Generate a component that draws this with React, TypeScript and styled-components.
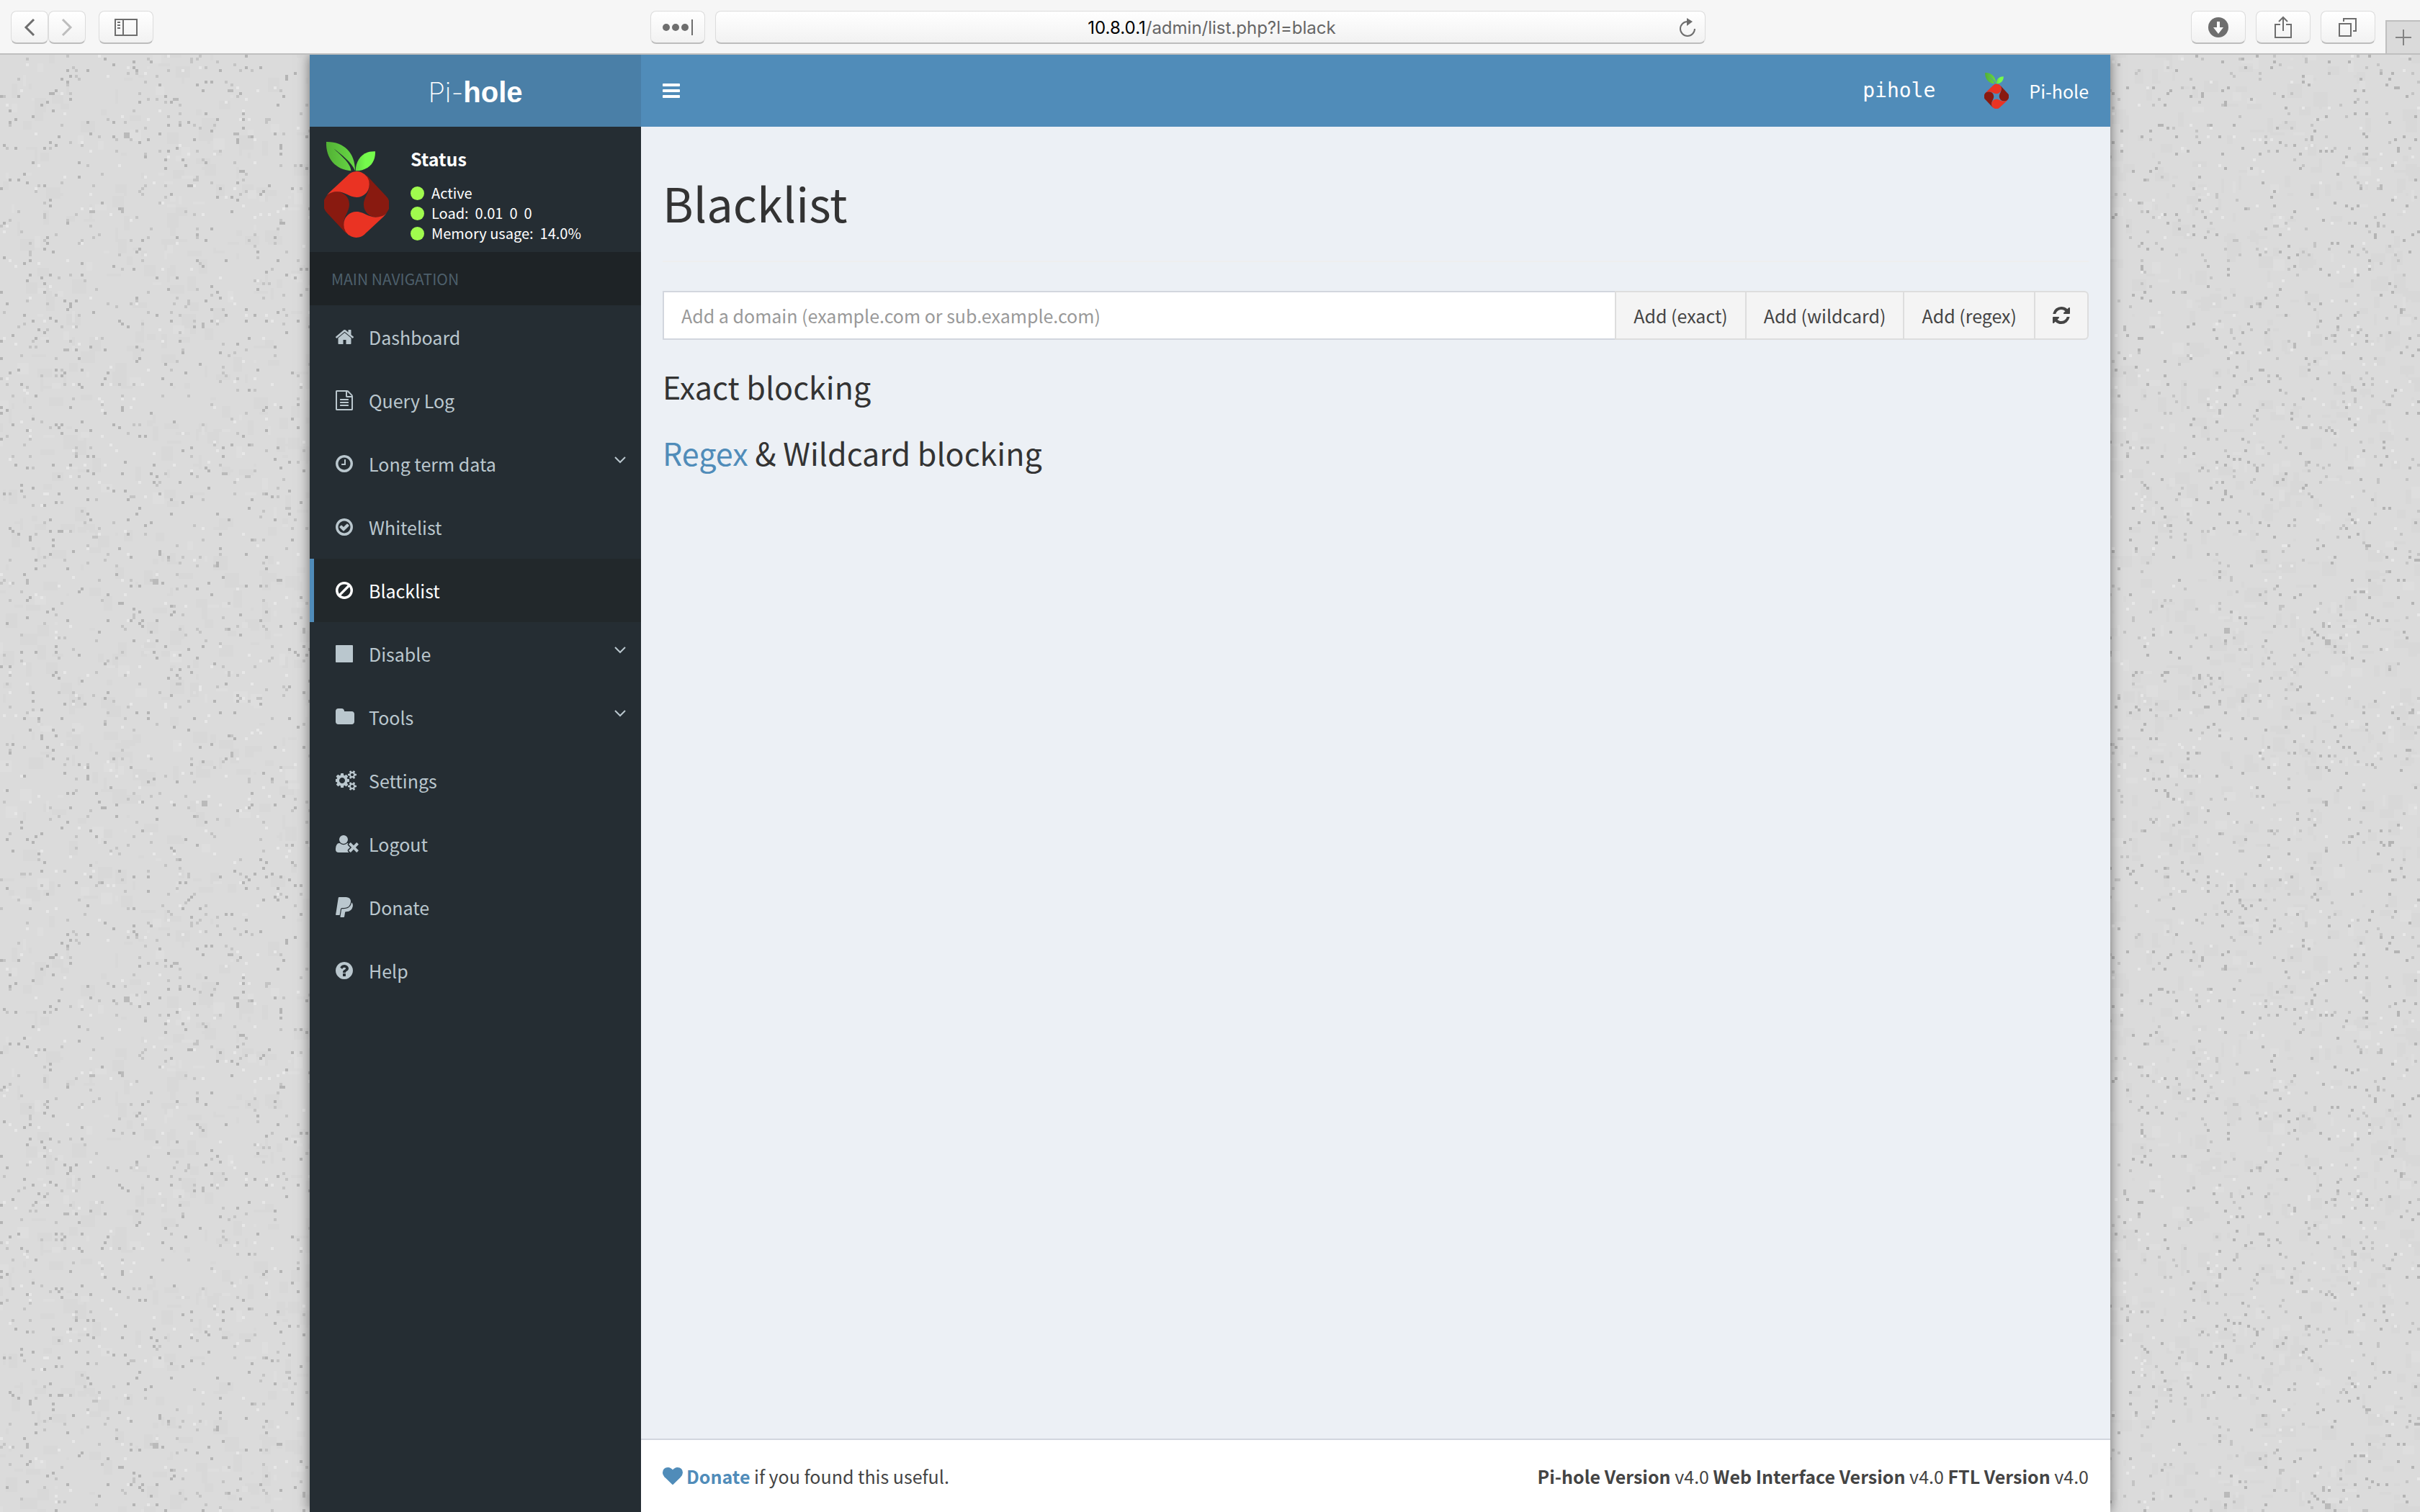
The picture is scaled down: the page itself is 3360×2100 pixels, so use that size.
import React from "react";
import styled, { createGlobalStyle, css } from "styled-components";

const sans = `"Source Sans Pro", "Noto Sans CJK SC", "Noto Sans", sans-serif`;
const system = `Inter, Roboto, "Liberation Sans", sans-serif`;

const GlobalStyle = createGlobalStyle`
  *, *::before, *::after { box-sizing: border-box; }
  body {
    margin: 0;
    background: #dbdbdb;
    color: #333;
    font-family: ${sans};
    font-size: 25px;
    line-height: 40px;
  }
  h1, h2, p, ul { margin: 0; padding: 0; font-weight: 400; }
  a { color: inherit; text-decoration: none; }
  button, input { font: inherit; color: inherit; margin: 0; }
  button { cursor: pointer; }
  svg { display: block; flex: none; }
`;

/* ---------- Speckled backdrop ---------- */

const TILE = 1200;
const CELL = 4;

function buildSpeckles() {
  let seed = 20180806;
  const random = () => {
    seed = (seed * 1664525 + 1013904223) >>> 0;
    return seed / 4294967296;
  };
  const layer = (count: number, min: number, max: number) => {
    let d = "";
    for (let i = 0; i < count; i += 1) {
      const x = Math.floor((random() * TILE) / CELL) * CELL;
      const y = Math.floor((random() * TILE) / CELL) * CELL;
      const w = CELL * (min + Math.floor(random() * (max - min + 1)));
      const h = CELL * (min + Math.floor(random() * (max - min + 1)));
      d += `M${x} ${y}h${w}v${h}h-${w}z`;
    }
    return d;
  };
  return [
    { fill: "#d8d8d8", d: layer(1300, 1, 5) },
    { fill: "#dedede", d: layer(400, 1, 4) },
    { fill: "#c4c4c4", d: layer(1500, 1, 1) },
    { fill: "#b4b4b4", d: layer(1700, 1, 1) },
    { fill: "#bababa", d: layer(40, 1, 2) },
    { fill: "#e7e7e7", d: layer(700, 1, 1) },
  ];
}

const speckles = buildSpeckles();

const Backdrop = styled.svg`
  position: absolute;
  inset: 0;
  width: 100%;
  height: 100%;
  z-index: -1;
`;

/* ---------- Browser bar ---------- */

const Window = styled.div`
  position: relative;
  z-index: 0;
  min-height: 100vh;
  display: flex;
  flex-direction: column;
`;

const BrowserBar = styled.header`
  display: grid;
  grid-template-columns: minmax(0, 888fr) minmax(0, 1465fr) minmax(0, 992fr);
  align-items: center;
  height: 76px;
  padding: 2px 0 0 15px;
  background: #f6f6f6;
  border-bottom: 2px solid #bfbfbf;
  position: relative;
  z-index: 1;
`;

const BarGroup = styled.div<{ $gap: number }>`
  display: flex;
  align-items: center;
  gap: ${(p) => p.$gap}px;
`;

const chromeSurface = css`
  height: 46px;
  border: 1px solid #dcdcdc;
  border-bottom: 2px solid #bdbdbd;
  border-radius: 8px;
  background: linear-gradient(#fff, #f2f2f2);
`;

const ChromeButton = styled.button<{ $narrow?: boolean; $faded?: boolean }>`
  ${chromeSurface}
  display: grid;
  place-items: center;
  flex: none;
  width: ${(p) => (p.$narrow ? 52 : 76)}px;
  padding: 0;
  color: ${(p) => (p.$faded ? "#bdbdbd" : "#6e6e6e")};
`;

const AddressBar = styled.div`
  ${chromeSurface}
  display: flex;
  align-items: center;
  flex: 1;
  min-width: 0;
  padding: 0 12px 0 40px;
`;

const Address = styled.button`
  flex: 1;
  border: 0;
  padding: 2px 0 0;
  background: none;
  color: #666;
  font-family: ${system};
  font-size: 24px;
  line-height: 40px;
  cursor: text;
`;

const Host = styled.span`
  color: #000;
`;

const ReloadButton = styled.button`
  border: 0;
  padding: 0;
  background: none;
  color: #6e6e6e;
`;

const EndTools = styled.div`
  display: flex;
  justify-content: flex-end;
  align-items: center;
  align-self: stretch;
  gap: 14px;
`;

const NewTab = styled.button`
  display: grid;
  place-items: center;
  align-self: flex-end;
  width: 48px;
  height: 46px;
  padding: 0;
  border: 0;
  border-top: 2px solid #bfbfbf;
  border-left: 2px solid #bfbfbf;
  background: #dadada;
  color: #838383;
`;

/* ---------- Application frame ---------- */

const Frame = styled.div`
  flex: 1;
  display: flex;
  flex-direction: column;
  width: 100%;
  max-width: 2500px;
  margin: 0 auto;
  box-shadow: 0 0 16px rgba(0, 0, 0, 0.5);
`;

const TopBar = styled.div`
  display: flex;
  height: 100px;
  color: #fff;
  background: #508cb9;
`;

const Brand = styled.a`
  display: flex;
  align-items: center;
  justify-content: center;
  width: 460px;
  padding-top: 4px;
  background: #4a7fa7;
  font: 200 40px/96px "Helvetica Neue", "Liberation Sans", Arial, sans-serif;
`;

const BrandLight = styled.span`
  font-family: "Helvetica Neue", Inter, Roboto, sans-serif;
  font-weight: 200;
  font-size: 38px;
`;

const BrandBold = styled.b`
  font-weight: 700;
`;

const Nav = styled.nav`
  flex: 1;
  display: flex;
  align-items: center;
  justify-content: space-between;
  padding: 0 30px;
`;

const MenuToggle = styled.button`
  border: 0;
  padding: 0;
  background: none;
  color: #fff;
`;

const Account = styled.div`
  display: flex;
  align-items: center;
  gap: 68px;
`;

const HostName = styled.code`
  font-family: "DejaVu Sans Mono", "Liberation Mono", monospace;
  font-size: 28px;
`;

const User = styled.a`
  display: flex;
  align-items: center;
  gap: 28px;
`;

const Body = styled.div`
  flex: 1;
  display: flex;
`;

/* ---------- Sidebar ---------- */

const Sidebar = styled.aside`
  flex: none;
  width: 460px;
  background: #252d33;
`;

const StatusPanel = styled.section`
  display: flex;
  gap: 30px;
  height: 174px;
  padding: 20px;
  color: #fff;
`;

const StatusTitle = styled.p`
  font-weight: 700;
  line-height: 40px;
  margin-bottom: 14px;
  padding-top: 4px;
`;

const StatusLine = styled.div`
  display: flex;
  align-items: center;
  gap: 10px;
  font-size: 20px;
  line-height: 28px;
  white-space: pre;
`;

const Dot = styled.i`
  width: 19px;
  height: 19px;
  border-radius: 50%;
  background: #a0fb4e;
`;

const NavHeading = styled.h2`
  padding: 0 30px;
  background: #1e2326;
  color: #4d5f6b;
  font-size: 21px;
  line-height: 74px;
`;

const NavList = styled.ul`
  list-style: none;
`;

const NavLink = styled.a<{ $active?: boolean }>`
  display: flex;
  align-items: center;
  height: 88px;
  padding: 0 20px 0 30px;
  border-left: 6px solid ${(p) => (p.$active ? "#508cb9" : "transparent")};
  background: ${(p) => (p.$active ? "#22282b" : "transparent")};
  color: ${(p) => (p.$active ? "#fff" : "#bac7ce")};
`;

const IconSlot = styled.span`
  width: 46px;
`;

const Caret = styled.svg`
  margin: 0 0 10px auto;
`;

/* ---------- Main column ---------- */

const Main = styled.div`
  flex: 1;
  min-width: 0;
  display: flex;
  flex-direction: column;
  background: #ecf0f5;
`;

const Content = styled.main`
  flex: 1;
  padding: 30px;
`;

const PageHeader = styled.div`
  padding: 36px 0 42px;
  margin-bottom: 40px;
  border-bottom: 2px solid #eee;
`;

const PageTitle = styled.h1`
  font-size: 65px;
  line-height: 78px;
`;

const DomainForm = styled.form`
  display: flex;
  height: 68px;
  margin-bottom: 38px;
`;

const DomainInput = styled.input`
  flex: 1;
  min-width: 0;
  padding: 0 24px;
  border: 2px solid #d2d6de;
  border-right: 0;
  border-radius: 0;
  background: #fff;
  outline: 0;
  &::placeholder {
    color: #999;
    opacity: 1;
  }
`;

const FormButton = styled.button`
  display: flex;
  align-items: center;
  padding: 0 24px;
  border: 2px solid #ddd;
  border-right-width: 0;
  background: #f4f4f4;
  color: #444;
  &:last-child {
    border-right-width: 2px;
    border-radius: 0 6px 6px 0;
  }
`;

const ListTitle = styled.h2`
  font-size: 43px;
  line-height: 52px;
  margin-bottom: 40px;
`;

const Accent = styled.a`
  color: #508cb9;
`;

const Footer = styled.footer`
  display: flex;
  align-items: center;
  justify-content: space-between;
  height: 102px;
  padding: 0 30px;
  border-top: 2px solid #d2d6de;
  background: #fff;
  color: #444;
`;

const DonateNote = styled.p`
  display: flex;
  align-items: center;
  gap: 5px;
`;

/* ---------- Icons ---------- */

type Glyph = { box: string; w: number; d: string };

const ring =
  "M1440 896q0-148-73-273t-198-198-273-73-273 73-198 198-73 273 73 273 198 198 273 73 273-73 198-198 73-273zm224 0q0 209-103 385.5t-279.5 279.5-385.5 103-385.5-103-279.5-279.5-103-385.5 103-385.5 279.5-279.5 385.5-103 385.5 103 279.5 279.5 103 385.5z";
const disc =
  "M1664 896q0 209-103 385.5t-279.5 279.5-385.5 103-385.5-103-279.5-279.5-103-385.5 103-385.5 279.5-279.5 385.5-103 385.5 103 279.5 279.5 103 385.5z";
const smallCog =
  "v140q0 16-149 31-12 27-30 52 51 113 51 138 0 4-4 7-122 71-124 71-8 0-46-47t-52-68q-20 2-30 2t-30-2q-14 21-52 68t-46 47q-2 0-124-71-4-3-4-7 0-25 51-138-18-25-30-52-149-15-149-31v-140q0-16 149-31 13-29 30-52-51-113-51-138 0-4 4-7 4-2 35-20t59-34 30-16q8 0 46 46.5t52 67.5q20-2 30-2t30 2q51-71 92-112l6-2q4 0 124 70 4 3 4 7 0 25-51 138 17 23 30 52 149 15 149 31z";

const glyphs: Record<string, Glyph> = {
  home: {
    box: "96 0 1664 1792",
    w: 26,
    d: "M1472 992v480q0 26-19 45t-45 19h-384v-384h-256v384h-384q-26 0-45-19t-19-45v-480q0-1 .5-3t.5-3l575-474 575 474q1 2 1 6zm223-69l-62 74q-8 9-21 11h-3q-13 0-21-7l-692-577-692 577q-12 8-24 7-13-2-21-11l-62-74q-8-10-7-23.5t11-21.5l719-599q32-26 76-26t76 26l244 204v-195q0-14 9-23t23-9h192q14 0 23 9t9 23v408l219 182q10 8 11 21.5t-7 23.5z",
  },
  file: {
    box: "128 0 1536 1792",
    w: 24,
    d: "M1596 380q28 28 48 76t20 88v1152q0 40-28 68t-68 28h-1344q-40 0-68-28t-28-68v-1600q0-40 28-68t68-28h896q40 0 88 20t76 48zm-444-244v376h376q-10-29-22-41l-313-313q-12-12-41-22zm384 1528v-1024h-416q-40 0-68-28t-28-68v-416h-768v1536h1280zm-1024-864q0-14 9-23t23-9h704q14 0 23 9t9 23v64q0 14-9 23t-23 9h-704q-14 0-23-9t-9-23v-64zm736 224q14 0 23 9t9 23v64q0 14-9 23t-23 9h-704q-14 0-23-9t-9-23v-64q0-14 9-23t23-9h704zm0 256q14 0 23 9t9 23v64q0 14-9 23t-23 9h-704q-14 0-23-9t-9-23v-64q0-14 9-23t23-9h704z",
  },
  clock: {
    box: "128 0 1536 1792",
    w: 24,
    d: "M1024 544v448q0 14-9 23t-23 9h-320q-14 0-23-9t-9-23v-64q0-14 9-23t23-9h224v-352q0-14 9-23t23-9h64q14 0 23 9t9 23z" + ring,
  },
  check: {
    box: "128 0 1536 1792",
    w: 24,
    d: "M1299 813l-422 422q-19 19-45 19t-45-19l-294-294q-19-19-19-45t19-45l102-102q19-19 45-19t45 19l147 147 275-275q19-19 45-19t45 19l102 102q19 19 19 45t-19 45z" + ring,
  },
  ban: {
    box: "128 0 1536 1792",
    w: 24,
    d: "M1440 893q0-161-87-295l-754 753q137 89 297 89 111 0 211.5-43.5t173.5-116.5 116-174.5 43-212.5zm-999 299l755-754q-135-91-300-91-148 0-273 73t-198 199-73 274q0 162 89 299zm1223-299q0 157-61 300t-163.5 246-245 164-298.5 61-298.5-61-245-164-163.5-246-61-300 61-299.5 163.5-245.5 245-164 298.5-61 298.5 61 245 164 163.5 245.5 61 299.5z",
  },
  stop: {
    box: "128 0 1536 1792",
    w: 24,
    d: "M1664 192v1408q0 26-19 45t-45 19h-1408q-26 0-45-19t-19-45v-1408q0-26 19-45t45-19h1408q26 0 45 19t19 45z",
  },
  folder: {
    box: "64 0 1664 1792",
    w: 26,
    d: "M1728 608v704q0 92-66 158t-158 66h-1216q-92 0-158-66t-66-158v-960q0-92 66-158t158-66h320q92 0 158 66t66 158v32h672q92 0 158 66t66 158z",
  },
  cogs: {
    box: "0 0 1920 1792",
    w: 30,
    d:
      "M832 896q0-106-75-181t-181-75-181 75-75 181 75 181 181 75 181-75 75-181zm768 512q0-52-38-90t-90-38-90 38-38 90q0 53 37.5 90.5t90.5 37.5 90.5-37.5 37.5-90.5zm0-1024q0-52-38-90t-90-38-90 38-38 90q0 53 37.5 90.5t90.5 37.5 90.5-37.5 37.5-90.5zm-384 421v185q0 10-7 19.5t-16 10.5l-155 24q-11 35-32 76 34 48 90 115 7 11 7 20 0 12-7 19-23 30-82.5 89.5t-78.5 59.5q-11 0-21-7l-115-90q-37 19-77 31-11 108-23 155-7 24-30 24h-186q-11 0-20-7.5t-10-17.5l-23-153q-34-10-75-31l-118 89q-7 7-20 7-11 0-21-8-144-133-144-160 0-9 7-19 10-14 41-53t47-61q-23-44-35-82l-152-24q-10-1-17-9.5t-7-19.5v-185q0-10 7-19.5t16-10.5l155-24q11-35 32-76-34-48-90-115-7-11-7-20 0-12 7-20 22-30 82-89t79-59q11 0 21 7l115 90q34-18 77-32 11-108 23-154 7-24 30-24h186q11 0 20 7.5t10 17.5l23 153q34 10 75 31l118-89q8-7 20-7 11 0 21 8 144 133 144 160 0 8-7 19-12 16-42 54t-45 60q23 48 34 82l152 23q10 2 17 10.5t7 19.5z" +
      "M1856 1338" + smallCog + "M1856 314" + smallCog,
  },
  logout: {
    box: "0 0 2048 1792",
    w: 32,
    d: "M704 896q-159 0-271.5-112.5t-112.5-271.5 112.5-271.5 271.5-112.5 271.5 112.5 112.5 271.5-112.5 271.5-271.5 112.5zm1077 320l249 249q9 9 9 23 0 13-9 22l-136 136q-9 9-22 9-14 0-23-9l-249-249-249 249q-9 9-23 9-13 0-22-9l-136-136q-9-9-9-22 0-14 9-23l249-249-249-249q-9-9-9-23 0-13 9-22l136-136q9-9 22-9 14 0 23 9l249 249 249-249q9-9 23-9 13 0 22 9l136 136q9 9 9 22 0 14-9 23zm-498 0l-181 181q-37 37-37 91 0 53 37 90l83 83q-21 3-44 3h-874q-121 0-194-69t-73-190q0-53 3.5-103.5t14-109 26.5-108.5 43-97.5 62-81 85.5-53.5 111.5-20q19 0 39 17 154 122 319 122t319-122q20-17 39-17 28 0 57 6-28 27-41 50t-13 56q0 54 37 91z",
  },
  paypal: {
    box: "128 0 1536 1792",
    w: 24,
    d: "M1647 646q18 84-4 204-87 444-565 444h-44q-25 0-44 16.5t-24 42.5l-4 19-55 346-2 15q-5 26-24.5 42.5t-44.5 16.5h-251q-21 0-33-15t-9-36q9-56 26.5-168t26.5-168 27-167.5 27-167.5q5-37 43-37h131q133 2 236-21 175-39 287-144 102-95 155-246 24-70 35-133 1-6 2.5-7.5t3.5-1 6 3.5q79 59 98 162zm-172-282q0 107-46 236-80 233-302 315-113 40-252 42 0 1-90 1l-90-1q-100 0-118 96-2 8-85 530-1 10-12 10h-295q-22 0-36.5-16.5t-11.5-38.5l232-1471q5-29 27.5-48t51.5-19h598q34 0 97.5 13t111.5 32q107 41 163.5 123t56.5 196z",
  },
  help: {
    box: "128 0 1536 1792",
    w: 24,
    d: "M1024 1376v-192q0-14-9-23t-23-9h-192q-14 0-23 9t-9 23v192q0 14 9 23t23 9h192q14 0 23-9t9-23zm256-672q0-88-55.5-163t-138.5-116-170-41q-243 0-371 213-15 24 8 42l132 100q7 6 19 6 16 0 25-12 53-68 86-92 34-24 86-24 48 0 85.5 26t37.5 59q0 38-20 61t-68 45q-63 28-115.5 86.5t-52.5 125.5v36q0 14 9 23t23 9h192q14 0 23-9t9-23q0-19 21.5-49.5t54.5-49.5q32-18 49-28.5t46-35 44.5-48 28-60.5 12.5-81z" + disc,
  },
  refresh: {
    box: "128 0 1536 1792",
    w: 24,
    d: "M1639 1056q0 5-1 7-64 268-268 434.5t-478 166.5q-146 0-282.5-55t-243.5-157l-129 129q-19 19-45 19t-45-19-19-45v-448q0-26 19-45t45-19h448q26 0 45 19t19 45-19 45l-137 137q71 66 161 102t187 36q134 0 250-65t186-179q11-17 53-117 8-23 30-23h192q13 0 22.5 9.5t9.5 22.5zm25-800v448q0 26-19 45t-45 19h-448q-26 0-45-19t-19-45 19-45l138-138q-148-137-349-137-134 0-250 65t-186 179q-11 17-53 117-8 23-30 23h-199q-13 0-22.5-9.5t-9.5-22.5v-7q65-268 270-434.5t480-166.5q146 0 284 55.5t245 156.5l130-129q19-19 45-19t45 19 19 45z",
  },
  heart: {
    box: "0 0 1792 1792",
    w: 28,
    d: "M896 1664q-26 0-44-18l-624-602q-10-8-27.5-26t-55.5-65.5-68-97.5-53.5-121-23.5-138q0-220 127-344t351-124q62 0 126.5 21.5t120 58 95.5 68.5 76 68q36-36 76-68t95.5-68.5 120-58 126.5-21.5q224 0 351 124t127 344q0 221-229 450l-623 600q-18 18-44 18z",
  },
  bars: {
    box: "128 0 1536 1792",
    w: 24,
    d: "M1664 1344v128q0 26-19 45t-45 19h-1408q-26 0-45-19t-19-45v-128q0-26 19-45t45-19h1408q26 0 45 19t19 45zM1664 832v128q0 26-19 45t-45 19h-1408q-26 0-45-19t-19-45v-128q0-26 19-45t45-19h1408q26 0 45 19t19 45zM1664 320v128q0 26-19 45t-45 19h-1408q-26 0-45-19t-19-45v-128q0-26 19-45t45-19h1408q26 0 45 19t19 45z",
  },
};

function Icon({ name }: { name: string }) {
  const g = glyphs[name];
  return (
    <svg viewBox={g.box} width={g.w} height={28} fill="currentColor" fillRule="evenodd" aria-hidden="true">
      <path d={g.d} />
    </svg>
  );
}

const petal =
  "M10 226Q14 220 22 212L97 142A52 52 0 0 1 188 180A52 52 0 0 1 135 232C105 232 88 209 55 209C38 209 20 215 10 226Z";

function PiholeLogo({ id, width, height }: { id: string; width: number; height: number }) {
  return (
    <svg viewBox="0 0 270 398" width={width} height={height} aria-hidden="true">
      <defs>
        <linearGradient id={`${id}-leaf`} x1="0" x2="1">
          <stop offset="0" stopColor="#52b035" />
          <stop offset="1" stopColor="#68d945" />
        </linearGradient>
        <linearGradient id={`${id}-sprout`} x1="0" x2="1">
          <stop offset="0" stopColor="#63d943" />
          <stop offset="0.5" stopColor="#75fb4c" />
        </linearGradient>
      </defs>
      <path fill={`url(#${id}-leaf)`} d="M9 1C80-1 130 45 129 122C115 85 72 55 40 29C72 60 112 92 112 122C50 117 6 72 9 1Z" />
      <path fill={`url(#${id}-sprout)`} d="M131 122C132 72 165 38 213 41C215 92 178 123 131 122Z" />
      <g fill="#891a10">
        <path d={petal} transform="rotate(90 135 262)" />
        <path d={petal} transform="rotate(270 135 262)" />
      </g>
      <g fill="#ea3323">
        <path d={petal} />
        <path d={petal} transform="rotate(180 135 262)" />
      </g>
    </svg>
  );
}

const Line = ({ w, h, d, width = 2 }: { w: number; h: number; d: string; width?: number }) => (
  <svg viewBox={`0 0 ${w} ${h}`} width={w} height={h} fill="none" stroke="currentColor" strokeWidth={width} aria-hidden="true">
    <path d={d} />
  </svg>
);

/* ---------- Page ---------- */

const menu = [
  { icon: "home", label: "Dashboard" },
  { icon: "file", label: "Query Log" },
  { icon: "clock", label: "Long term data", tree: true },
  { icon: "check", label: "Whitelist" },
  { icon: "ban", label: "Blacklist", active: true },
  { icon: "stop", label: "Disable", tree: true },
  { icon: "folder", label: "Tools", tree: true },
  { icon: "cogs", label: "Settings" },
  { icon: "logout", label: "Logout" },
  { icon: "paypal", label: "Donate" },
  { icon: "help", label: "Help" },
];

function Browser() {
  return (
    <BrowserBar>
      <BarGroup $gap={18}>
        <BarGroup $gap={0}>
          <ChromeButton $narrow aria-label="Back">
            <Line w={16} h={26} d="M14 2L3 13L14 24" width={3} />
          </ChromeButton>
          <ChromeButton $narrow $faded aria-label="Forward">
            <Line w={16} h={26} d="M2 2L13 13L2 24" width={3} />
          </ChromeButton>
        </BarGroup>
        <ChromeButton aria-label="Show sidebar">
          <Line w={32} h={24} d="M1 1H31V23H1ZM12 1V23M4 5H8M4 9H8M4 13H8" />
        </ChromeButton>
      </BarGroup>
      <BarGroup $gap={14}>
        <ChromeButton aria-label="Extensions">
          <svg width="42" height="22" viewBox="0 0 42 22" fill="currentColor" aria-hidden="true">
            <circle cx="5" cy="11" r="5" />
            <circle cx="18" cy="11" r="5" />
            <circle cx="31" cy="11" r="5" />
            <path d="M40 0h2v22h-2z" />
          </svg>
        </ChromeButton>
        <AddressBar>
          <Address>
            <Host>10.8.0.1</Host>/admin/list.php?l=black
          </Address>
          <ReloadButton aria-label="Reload">
            <svg width="24" height="28" viewBox="0 0 24 28" fill="none" stroke="currentColor" strokeWidth="2" aria-hidden="true">
              <path d="M12 6A10 10 0 1 0 22 16" />
              <path d="M11 1V12L19 6Z" fill="currentColor" stroke="none" />
            </svg>
          </ReloadButton>
        </AddressBar>
      </BarGroup>
      <EndTools>
        <ChromeButton aria-label="Downloads">
          <svg width="28" height="28" viewBox="0 0 28 28" aria-hidden="true">
            <circle cx="14" cy="14" r="14" fill="currentColor" />
            <path d="M12 6h4v8h5l-7 9-7-9h5z" fill="#fff" />
          </svg>
        </ChromeButton>
        <ChromeButton aria-label="Share">
          <Line w={24} h={32} d="M8 12H1V30H23V12H16M12 21V2M6 8L12 2L18 8" />
        </ChromeButton>
        <ChromeButton aria-label="Show all tabs">
          <Line w={26} h={26} d="M1 8H17V25H1ZM7 5V1H24V18H20" />
        </ChromeButton>
        <NewTab aria-label="New tab">
          <Line w={22} h={22} d="M11 0V22M0 11H22" />
        </NewTab>
      </EndTools>
    </BrowserBar>
  );
}

function SideMenu() {
  return (
    <Sidebar>
      <StatusPanel>
        <PiholeLogo id="panel" width={90} height={134} />
        <div>
          <StatusTitle>Status</StatusTitle>
          <StatusLine><Dot />Active</StatusLine>
          <StatusLine><Dot />{"Load:  0.01  0  0"}</StatusLine>
          <StatusLine><Dot />{"Memory usage:  14.0%"}</StatusLine>
        </div>
      </StatusPanel>
      <NavHeading>MAIN NAVIGATION</NavHeading>
      <NavList>
        {menu.map((item) => (
          <li key={item.label}>
            <NavLink href="#" $active={item.active}>
              <IconSlot>
                <Icon name={item.icon} />
              </IconSlot>
              {item.label}
              {item.tree && (
                <Caret width="18" height="12" viewBox="0 0 18 12" fill="none" stroke="currentColor" strokeWidth="2" aria-hidden="true">
                  <path d="M2 2L9 9L16 2" />
                </Caret>
              )}
            </NavLink>
          </li>
        ))}
      </NavList>
    </Sidebar>
  );
}

export default function App() {
  return (
    <Window>
      <GlobalStyle />
      <Backdrop aria-hidden="true">
        <defs>
          <pattern id="speckle" width={TILE} height={TILE} patternUnits="userSpaceOnUse">
            {speckles.map((s) => (
              <path key={s.fill} fill={s.fill} d={s.d} />
            ))}
          </pattern>
        </defs>
        <rect width="100%" height="100%" fill="url(#speckle)" />
      </Backdrop>
      <Browser />
      <Frame>
        <TopBar>
          <Brand href="#">
            <BrandLight>Pi-</BrandLight>
            <BrandBold>hole</BrandBold>
          </Brand>
          <Nav>
            <MenuToggle aria-label="Toggle navigation">
              <Icon name="bars" />
            </MenuToggle>
            <Account>
              <HostName>pihole</HostName>
              <User href="#">
                <PiholeLogo id="user" width={34} height={50} />
                Pi-hole
              </User>
            </Account>
          </Nav>
        </TopBar>
        <Body>
          <SideMenu />
          <Main>
            <Content>
              <PageHeader>
                <PageTitle>Blacklist</PageTitle>
              </PageHeader>
              <DomainForm onSubmit={(e) => e.preventDefault()}>
                <DomainInput
                  type="text"
                  aria-label="Domain"
                  placeholder="Add a domain (example.com or sub.example.com)"
                />
                <FormButton type="button">Add (exact)</FormButton>
                <FormButton type="button">Add (wildcard)</FormButton>
                <FormButton type="button">Add (regex)</FormButton>
                <FormButton type="button" aria-label="Refresh">
                  <Icon name="refresh" />
                </FormButton>
              </DomainForm>
              <ListTitle>Exact blocking</ListTitle>
              <ListTitle>
                <Accent href="#">Regex</Accent> &amp; Wildcard blocking
              </ListTitle>
            </Content>
            <Footer>
              <DonateNote>
                <Accent as="span"><Icon name="heart" /></Accent>
                <span>
                  <Accent href="#"><b>Donate</b></Accent> if you found this useful.
                </span>
              </DonateNote>
              <p>
                <b>Pi-hole Version</b> v4.0 <b>Web Interface Version</b> v4.0 <b>FTL Version</b> v4.0
              </p>
            </Footer>
          </Main>
        </Body>
      </Frame>
    </Window>
  );
}
